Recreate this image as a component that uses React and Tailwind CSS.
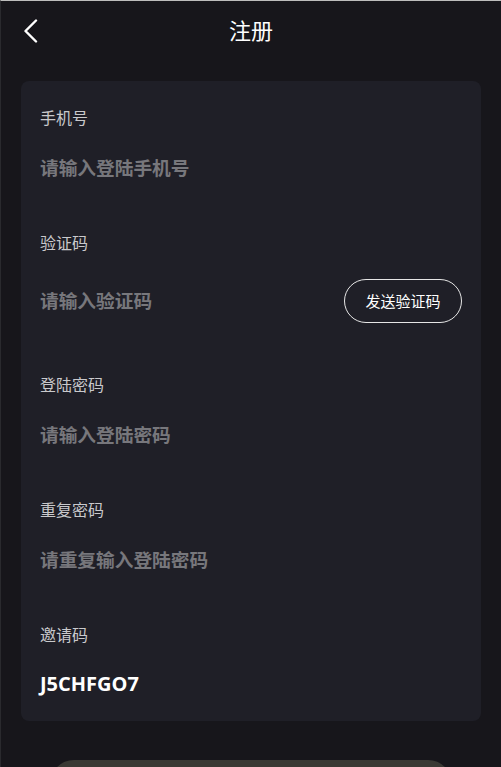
import React from "react";

const cjk = { fontFamily: '"Noto Sans CJK SC", "Noto Sans", sans-serif' };

function Label({ children }) {
  return <div className="h-[24px] leading-[24px] text-[16px] text-[#c9c9cc]">{children}</div>;
}

function Field({ label, children, last = false }) {
  return (
    <div className={last ? "" : "mb-[36px]"}>
      <Label>{label}</Label>
      <div className="mt-[11px] flex items-center justify-between h-[54px]">{children}</div>
    </div>
  );
}

function Placeholder({ children }) {
  return <span className="text-[18.7px] font-bold text-[#77777c]">{children}</span>;
}

export default function App() {
  return (
    <div
      className="w-[501px] h-[767px] overflow-hidden bg-[#17161b] border-t border-t-[#bdbdbd] border-l border-l-[#2a2a2e]"
      style={cjk}
    >
      <div className="relative h-[57px] flex items-center justify-center">
        <div className="absolute left-[21px] top-[18px]">
          <svg width="18" height="24" viewBox="0 0 18 24" fill="none">
            <path d="M14 1.5 L3.5 12 L14 22.5" stroke="#ffffff" strokeWidth="2.4" strokeLinecap="round" strokeLinejoin="round" />
          </svg>
        </div>
        <span className="text-[22px] text-white">注册</span>
      </div>
      <div className="mt-[23px] ml-[20px] w-[460px] rounded-[8px] bg-[#1f1f27] pl-[19px] pr-[19px] pt-[24px] pb-[10px]">
        <Field label="手机号">
          <Placeholder>请输入登陆手机号</Placeholder>
        </Field>
        <div className="mb-[37px]">
          <Label>验证码</Label>
          <div className="mt-[11px] h-[70px] flex items-center justify-between">
            <Placeholder>请输入验证码</Placeholder>
            <button className="mt-[2px] w-[118px] h-[44px] rounded-full border border-[#e6e6e6] text-white text-[15px] flex items-center justify-center">
              发送验证码
            </button>
          </div>
        </div>
        <Field label="登陆密码">
          <Placeholder>请输入登陆密码</Placeholder>
        </Field>
        <Field label="重复密码">
          <Placeholder>请重复输入登陆密码</Placeholder>
        </Field>
        <Field label="邀请码" last>
          <span
            className="text-[20px] font-bold text-white"
            style={{ fontFamily: '"Open Sans", "Noto Sans", sans-serif' }}
          >
            J5CHFGO7
          </span>
        </Field>
      </div>
      <div className="mt-[39px] mx-auto w-[402px] h-[48px] rounded-full bg-[#3a3934]" />
    </div>
  );
}
